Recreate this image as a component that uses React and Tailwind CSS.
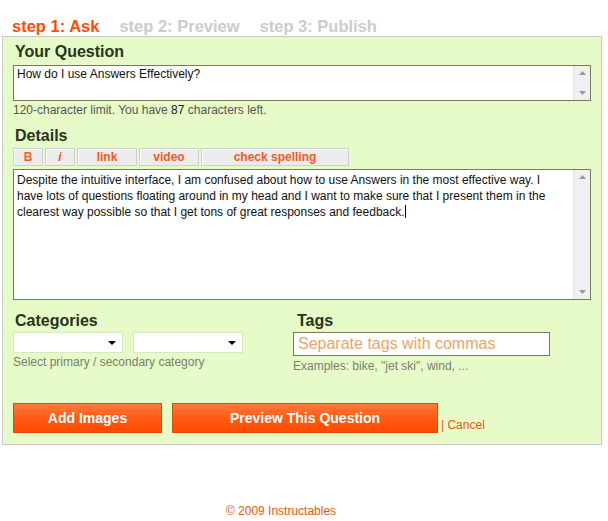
import React from "react";

function ScrollBar() {
  return (
    <div className="w-[17px] bg-[#f0f0f0] flex flex-col justify-between items-center py-[5px] border-l border-[#e4e4e4]">
      <svg width="7" height="4" viewBox="0 0 7 4"><path d="M0 4 L3.5 0 L7 4 Z" fill="#9a9a9a" /></svg>
      <svg width="7" height="4" viewBox="0 0 7 4"><path d="M0 0 L3.5 4 L7 0 Z" fill="#9a9a9a" /></svg>
    </div>
  );
}

function ToolBtn({ children, w, italic }) {
  return (
    <div
      className={`h-[18px] ${w} bg-[#ececec] border border-[#cfcfcf] shadow-[inset_1px_1px_0_#fff] flex items-center justify-center text-[12px] font-bold text-[#f05a28] ${italic ? "italic" : ""}`}
    >
      {children}
    </div>
  );
}

function Select({ w }) {
  return (
    <div className={`${w} h-[21px] bg-white border border-[#d8e8c0] flex items-center justify-end pr-[6px]`}>
      <svg width="8" height="4" viewBox="0 0 8 4"><path d="M0 0 L8 0 L4 4 Z" fill="#000" /></svg>
    </div>
  );
}

function OrangeBtn({ children, w }) {
  return (
    <div
      className={`${w} h-[30px] bg-gradient-to-b from-[#ff7a3a] via-[#ff5a12] to-[#ff4a00] border border-[#e04a00] flex items-center justify-center text-white font-bold text-[14px]`}
    >
      {children}
    </div>
  );
}

export default function App() {
  return (
    <div className="w-[608px] h-[521px] bg-white font-['Liberation_Sans',Arial,sans-serif] relative">
      <div className="flex gap-[20px] pl-[12px] pt-[17px] h-[36px] text-[16.5px] font-bold leading-[18px]">
        <span className="text-[#ff4d00]">step 1: Ask</span>
        <span className="text-[#cccccc]">step 2: Preview</span>
        <span className="text-[#cccccc]">step 3: Publish</span>
      </div>
      <div className="ml-[2px] w-[600px] h-[409px] bg-[#e6fbc8] border border-[#c8c8c8] pl-[10px] pt-[5px]">
        <div className="text-[16px] font-bold text-[#2a3320] leading-[20px] pl-[2px]">Your Question</div>
        <div className="mt-[3px] w-[578px] h-[36px] bg-white border border-[#7a7a5a] flex">
          <div className="flex-1 text-[12px] text-[#111] px-[3px] pt-[1px] leading-[15px]">How do I use Answers Effectively?</div>
          <ScrollBar />
        </div>
        <div className="mt-[2px] text-[12px] text-[#555] leading-[15px]">
          120-character limit. You have <span className="text-[#222]">87</span> characters left.
        </div>
        <div className="mt-[8px] text-[16px] font-bold text-[#2a3320] leading-[20px] pl-[2px]">Details</div>
        <div className="mt-[2px] flex gap-[2px]">
          <ToolBtn w="w-[30px]">B</ToolBtn>
          <ToolBtn w="w-[30px]" italic>i</ToolBtn>
          <ToolBtn w="w-[60px]">link</ToolBtn>
          <ToolBtn w="w-[60px]">video</ToolBtn>
          <ToolBtn w="w-[148px]">check spelling</ToolBtn>
        </div>
        <div className="mt-[3px] w-[578px] h-[131px] bg-white border border-[#7a7a5a] flex">
          <div className="flex-1 text-[12px] text-[#111] pl-[3px] pr-[10px] pt-[2px] leading-[16px]">
            Despite the intuitive interface, I am confused about how to use Answers in the most effective way. I have lots of questions floating around in my head and I want to make sure that I present them in the clearest way possible so that I get tons of great responses and feedback.
            <span className="inline-block w-px h-[13px] bg-black align-[-2px]" />
          </div>
          <ScrollBar />
        </div>
        <div className="mt-[11px] flex">
          <div className="w-[280px]">
            <div className="text-[16px] font-bold text-[#2a3320] leading-[20px] pl-[2px]">Categories</div>
            <div className="mt-[1px] flex gap-[10px]">
              <Select w="w-[110px]" />
              <Select w="w-[110px]" />
            </div>
            <div className="mt-[2px] text-[12px] text-[#7a7f70] leading-[15px]">Select primary / secondary category</div>
          </div>
          <div>
            <div className="text-[16px] font-bold text-[#2a3320] leading-[20px] pl-[4px]">Tags</div>
            <div className="mt-[1px] w-[257px] h-[24px] bg-white border border-[#7a7a5a] flex items-center px-[4px] text-[16px] text-[#e8a56b]">
              Separate tags with commas
            </div>
            <div className="mt-[3px] text-[12px] text-[#7a7f70] leading-[15px]">Examples: bike, "jet ski", wind, ...</div>
          </div>
        </div>
        <div className="mt-[29px] flex items-end">
          <OrangeBtn w="w-[149px]">Add Images</OrangeBtn>
          <div className="w-[10px]" />
          <OrangeBtn w="w-[266px]">Preview This Question</OrangeBtn>
          <span className="ml-[3px] text-[12px] text-[#e8590c] leading-[14px] mb-[1px]">| Cancel</span>
        </div>
      </div>
      <div className="absolute left-0 right-0 top-[502px] text-center text-[12px] text-[#e8590c] pr-[46px]">© 2009 Instructables</div>
    </div>
  );
}
